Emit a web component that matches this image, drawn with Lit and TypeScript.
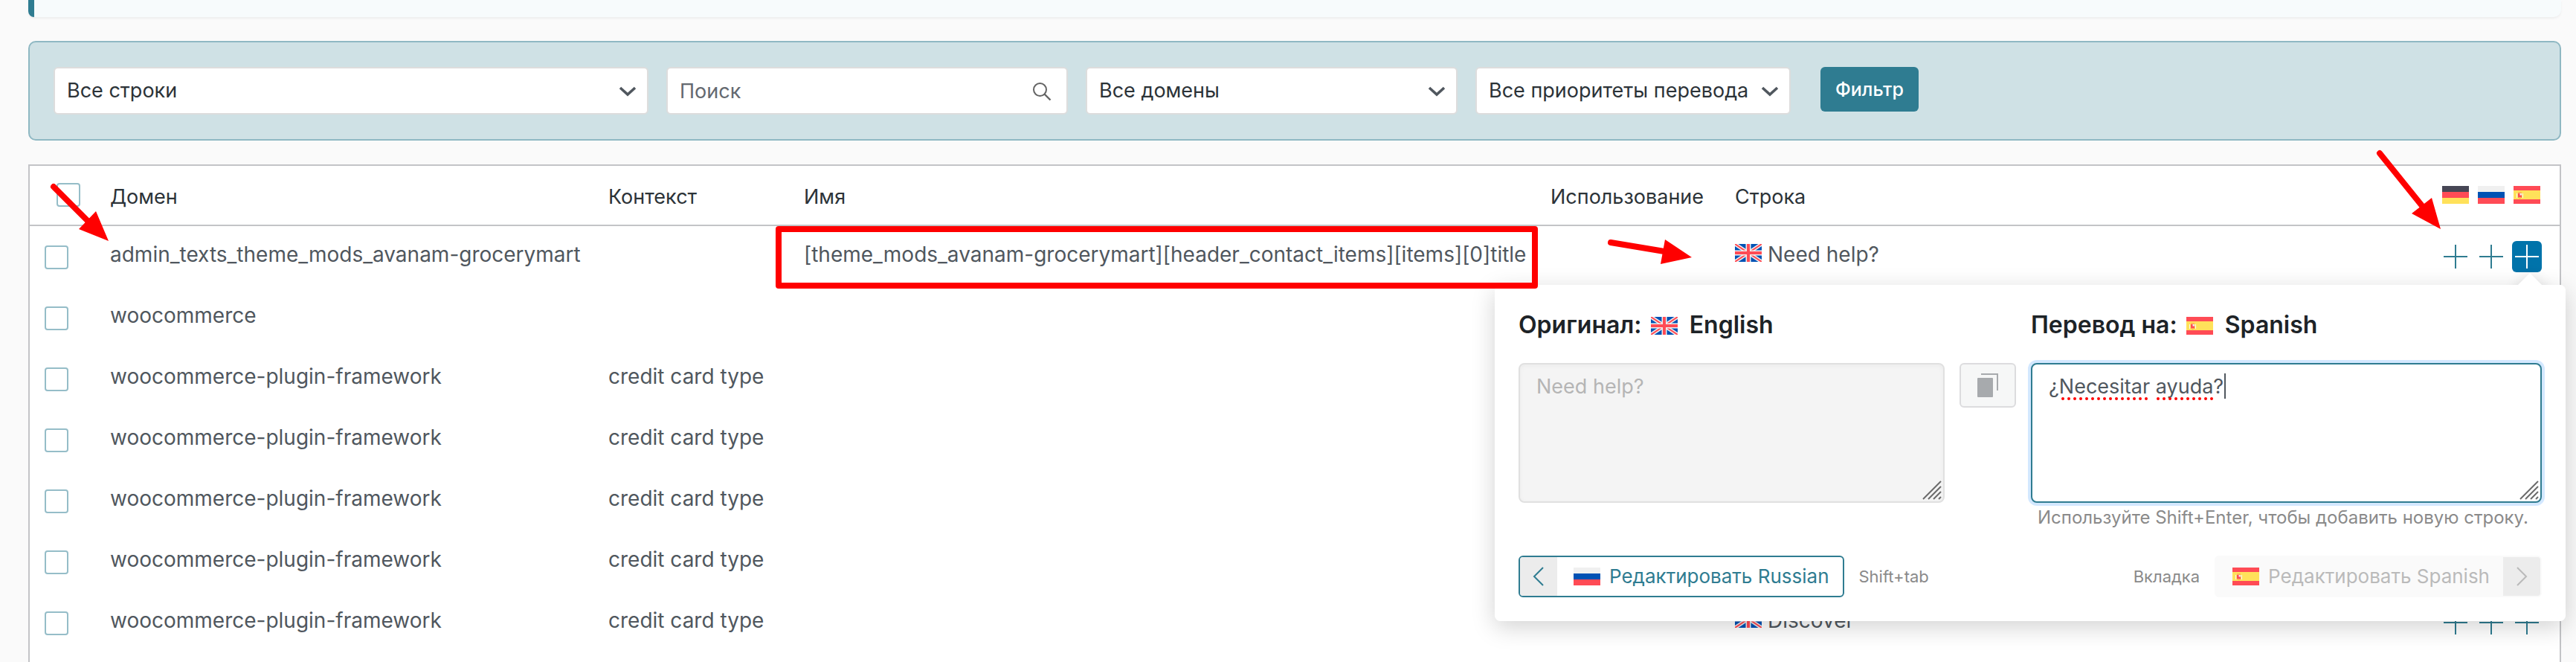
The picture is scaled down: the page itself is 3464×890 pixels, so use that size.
import { LitElement, html, css, svg, nothing } from "lit";
import { customElement, state } from "lit/decorators.js";

type Lang = "en" | "de" | "ru" | "es";

const flagArt = {
  en: svg`
    <rect width="36" height="24" fill="#0052b4"/>
    <path d="M0 0L36 24M36 0L0 24" stroke="#f0f0f0" stroke-width="5"/>
    <path d="M0 0L36 24M36 0L0 24" stroke="#ff4b55" stroke-width="2"/>
    <path d="M18 0V24M0 12H36" stroke="#f0f0f0" stroke-width="7"/>
    <path d="M18 0V24M0 12H36" stroke="#ff4b55" stroke-width="4"/>`,
  de: svg`
    <rect width="36" height="8" fill="#464655"/>
    <rect y="8" width="36" height="8" fill="#ff4b55"/>
    <rect y="16" width="36" height="8" fill="#ffe15a"/>`,
  ru: svg`
    <rect width="36" height="8" fill="#f0f0f0"/>
    <rect y="8" width="36" height="8" fill="#0052b4"/>
    <rect y="16" width="36" height="8" fill="#ff4b55"/>`,
  es: svg`
    <rect width="36" height="24" fill="#ff4b55"/>
    <rect y="6" width="36" height="12" fill="#ffe15a"/>
    <rect x="4" y="10" width="1" height="6" fill="#f5f5f5"/>
    <rect x="12" y="10" width="1" height="6" fill="#f5f5f5"/>
    <rect x="6" y="8" width="5" height="2" fill="#ffb655"/>
    <path d="M6 10h5v4a2.5 2.5 0 0 1-5 0z" fill="#ff4b55"/>
    <rect x="8.5" y="10" width="2.5" height="2.5" fill="#f5e6f0"/>
    <rect x="7" y="15" width="3" height="1" fill="#ffb655"/>`,
};

const flag = (lang: Lang) =>
  html`<svg class="flag" viewBox="0 0 36 24" aria-hidden="true">${flagArt[lang]}</svg>`;

const chevron = html`<svg class="chevron" viewBox="0 0 24 14" aria-hidden="true">
  <path d="M2 2L12 11L22 2" fill="none" stroke="#50575e" stroke-width="3.6"/>
</svg>`;

const plus = html`<svg class="plus-icon" viewBox="0 0 32 32" aria-hidden="true">
  <path d="M16 0V32M0 16H32" stroke="currentColor" stroke-width="2"/>
</svg>`;

const grip = html`<svg class="grip" viewBox="0 0 26 26" aria-hidden="true">
  <path d="M1 25L25 1M8 25L25 8M15 25L25 15M22 25L25 22" stroke="#6b6b6b" stroke-width="2"/>
</svg>`;

interface Row {
  domain: string;
  context?: string;
  name?: string;
  text?: string;
}

const framework: Row = { domain: "woocommerce-plugin-framework", context: "credit card type" };

const rows: Row[] = [
  {
    domain: "admin_texts_theme_mods_avanam-grocerymart",
    name: "[theme_mods_avanam-grocerymart][header_contact_items][items][0]title",
    text: "Need help?",
  },
  { domain: "woocommerce" },
  framework,
  framework,
  framework,
  framework,
  { ...framework, text: "Discover" },
];

const targets: { code: Lang; name: string }[] = [
  { code: "de", name: "German" },
  { code: "ru", name: "Russian" },
  { code: "es", name: "Spanish" },
];

@customElement("app-root")
export class AppRoot extends LitElement {
  @state() private translation = "¿Necesitar ayuda?";

  static styles = css`
    :host {
      display: block;
      font: 28px/38px Inter, "Liberation Sans", sans-serif;
      color: #50575e;
      background: #fafafa;
    }
    * { box-sizing: border-box; }
    button, input, select, textarea { font: inherit; margin: 0; }

    .page {
      position: relative;
      display: flex;
      flex-direction: column;
      gap: 32px;
      min-height: 100vh;
      padding: 0 20px 0 38px;
      overflow: hidden;
    }
    .notice {
      height: 23px;
      border-left: 8px solid #2f7c91;
      border-radius: 0 0 10px 8px;
      background: #f7fbfc;
      box-shadow: 0 2px 3px rgba(0, 0, 0, 0.05);
    }

    .filters {
      display: flex;
      align-items: flex-start;
      gap: 24px;
      padding: 33px 32px;
      border: 2px solid #8fb8c3;
      border-radius: 10px;
      background: #cfe1e5;
    }
    .field { position: relative; flex: none; }
    .field.status { width: 800px; }
    .field.search { width: 540px; }
    .field.domain { width: 500px; }
    .field.priority { width: 424px; }
    .control {
      display: block;
      width: 100%;
      height: 64px;
      padding: 0 16px;
      border: 2px solid #dddddd;
      border-radius: 6px;
      background: #fff;
      color: #2c3338;
      font-size: 27px;
      appearance: none;
      outline: none;
    }
    .control::placeholder { color: #646970; opacity: 1; }
    .chevron {
      position: absolute;
      right: 16px;
      top: 26px;
      width: 24px;
      height: 14px;
      pointer-events: none;
    }
    .magnifier {
      position: absolute;
      right: 22px;
      top: 20px;
      width: 26px;
      height: 26px;
    }
    .submit {
      height: 60px;
      margin-left: 16px;
      padding: 0 20px;
      border: 0;
      border-radius: 6px;
      background: #2f7c91;
      color: #fff;
      font-size: 25px;
      font-weight: 500;
    }

    .strings {
      position: relative;
      flex: 1;
      border: 2px solid #c3c4c7;
      border-bottom: 0;
      background: #fff;
    }
    table {
      width: 100%;
      table-layout: fixed;
      border-collapse: separate;
      border-spacing: 0;
    }
    .col-check { width: 98px; }
    .col-domain { width: 670px; }
    .col-context { width: 263px; }
    .col-name { width: 1004px; }
    .col-usage { width: 248px; }
    .col-langs { width: 180px; }
    th {
      height: 81px;
      padding: 23px 10px 0;
      border-bottom: 2px solid #c3c4c7;
      color: #2c3338;
      font-size: 27px;
      font-weight: 400;
      text-align: left;
      vertical-align: top;
      white-space: nowrap;
    }
    td {
      height: 82px;
      padding: 19px 10px 0;
      vertical-align: top;
      white-space: nowrap;
    }
    .check { padding: 26px 0 0 20px; }
    th.check { padding: 23px 0 0 36px; }
    .box {
      display: block;
      width: 32px;
      height: 32px;
      border: 2px solid #95bdc8;
      border-radius: 4px;
      background: #fff;
      appearance: none;
    }
    .flag { width: 36px; height: 24px; }
    .source .flag { margin-right: 8px; }
    th.langs { padding: 27px 26px 0 0; }
    td.langs { padding: 20px 24px 0 0; }
    .lang-list { display: flex; justify-content: flex-end; }
    th .lang-list { gap: 12px; }
    td .lang-list { gap: 8px; }
    .add {
      display: grid;
      place-items: center;
      width: 40px;
      height: 42px;
      padding: 0;
      border: 0;
      border-radius: 6px;
      background: none;
      color: #2f7c91;
    }
    .add.active { background: #0073aa; color: #fff; }
    .plus-icon { width: 32px; height: 32px; }

    .popup {
      position: absolute;
      z-index: 1;
      top: 160px;
      right: -8px;
      width: 1440px;
      padding: 34px 32px 32px;
      border-radius: 8px;
      background: #fff;
      box-shadow: 0 8px 32px rgba(0, 0, 0, 0.18);
    }
    .pointer {
      position: absolute;
      top: -9px;
      right: 31px;
      width: 34px;
      height: 34px;
      background: #fff;
      transform: rotate(45deg);
      box-shadow: -2px -2px 16px rgba(0, 0, 0, 0.08);
    }
    .backdrop {
      position: absolute;
      inset: 0;
      border-radius: 8px;
      background: #fff;
    }
    .editor {
      position: relative;
      display: grid;
      grid-template-columns: 573px 76px 1fr;
      grid-template-rows: 71px 188px;
      column-gap: 20px;
    }
    .title {
      color: #1d2327;
      font-size: 32px;
      line-height: 40px;
      font-weight: 600;
    }
    .title .flag { vertical-align: -2px; margin: 0 8px 0 4px; }
    .title.target { grid-column: 3; }
    .area { position: relative; }
    textarea {
      display: block;
      width: 100%;
      height: 188px;
      padding: 11px 22px;
      border: 2px solid #2f7c91;
      border-radius: 8px;
      background: #fff;
      color: #50575e;
      font-size: 27px;
      resize: none;
      outline: none;
      box-shadow: 0 0 0 4px #d3e8ff;
    }
    textarea:disabled {
      border-color: #e0e0e0;
      background: #f4f4f4;
      color: #b5b5b5;
      box-shadow: inset 0 2px 6px rgba(0, 0, 0, 0.04);
    }
    .grip {
      position: absolute;
      right: 4px;
      bottom: 4px;
      width: 26px;
      height: 26px;
    }
    .marks {
      position: absolute;
      left: 0;
      top: 0;
      width: 300px;
      height: 60px;
      pointer-events: none;
    }
    .copy {
      display: grid;
      place-items: center;
      width: 76px;
      height: 60px;
      padding: 0;
      border: 2px solid #dcdcde;
      border-radius: 6px;
      background: #f6f7f7;
    }
    .copy svg { width: 28px; height: 32px; }
    .hint {
      position: relative;
      margin: 4px 0 35px;
      padding-left: 698px;
      color: #8a8a8a;
      font-size: 24px;
      line-height: 32px;
    }
    .nav {
      position: relative;
      display: flex;
      align-items: center;
      gap: 20px;
      color: #8a8a8a;
      font-size: 22px;
    }
    .spacer { flex: 1; }
    .step {
      display: flex;
      align-items: center;
      height: 56px;
      padding: 0;
      border: 2px solid #2f7c91;
      border-radius: 6px;
      background: #fff;
      color: #2f7c91;
      font-size: 26px;
      overflow: hidden;
    }
    .step:disabled {
      border-color: #fafafa;
      background: #fafafa;
      color: #bababa;
    }
    .step .caption { display: flex; align-items: center; gap: 12px; padding: 0 18px 0 22px; }
    .step .arrow {
      display: grid;
      place-items: center;
      width: 50px;
      height: 52px;
      background: #ececec;
    }
    .arrow svg { width: 16px; height: 28px; }

    .annotations {
      position: absolute;
      z-index: 2;
      left: 0;
      top: 0;
      width: 3464px;
      height: 890px;
      pointer-events: none;
    }
  `;

  private select(kind: string, label: string, value: string) {
    return html`<div class="field ${kind}">
      <select class="control" aria-label=${label}><option>${value}</option></select>
      ${chevron}
    </div>`;
  }

  private filters() {
    return html`<form class="filters" @submit=${(e: Event) => e.preventDefault()}>
      ${this.select("status", "Строки", "Все строки")}
      <div class="field search">
        <input class="control" type="text" placeholder="Поиск" aria-label="Поиск">
        <svg class="magnifier" viewBox="0 0 26 26" aria-hidden="true">
          <circle cx="10.5" cy="10.5" r="8.5" fill="none" stroke="#646464" stroke-width="2"/>
          <path d="M16.5 16.5L24.5 24.5" stroke="#646464" stroke-width="2.4"/>
        </svg>
      </div>
      ${this.select("domain", "Домены", "Все домены")}
      ${this.select("priority", "Приоритеты", "Все приоритеты перевода")}
      <button class="submit" type="submit">Фильтр</button>
    </form>`;
  }

  private row(row: Row, index: number) {
    return html`<tr>
      <td class="check"><input class="box" type="checkbox" aria-label=${row.domain}></td>
      <td>${row.domain}</td>
      <td>${row.context ?? nothing}</td>
      <td>${row.name ?? nothing}</td>
      <td></td>
      <td class="source">${row.text ? html`${flag("en")}${row.text}` : nothing}</td>
      <td class="langs">
        <div class="lang-list">
          ${targets.map(
            (t) => html`<button
              class="add ${index === 0 && t.code === "es" ? "active" : ""}"
              type="button"
              aria-label=${t.name}
            >${plus}</button>`
          )}
        </div>
      </td>
    </tr>`;
  }

  private popup() {
    return html`<section class="popup">
      <div class="pointer"></div>
      <div class="backdrop"></div>
      <div class="editor">
        <label class="title" for="original">Оригинал: ${flag("en")} English</label>
        <label class="title target" for="translation">Перевод на: ${flag("es")} Spanish</label>
        <div class="area">
          <textarea id="original" disabled .value=${"Need help?"}></textarea>
          ${grip}
        </div>
        <button class="copy" type="button" aria-label="Копировать">
          <svg viewBox="0 0 28 32" aria-hidden="true">
            <rect y="6" width="21" height="26" rx="1" fill="#a7aaad"/>
            <path d="M5 1H27V23" fill="none" stroke="#a7aaad" stroke-width="2"/>
          </svg>
        </button>
        <div class="area">
          <textarea
            id="translation"
            spellcheck="false"
            .value=${this.translation}
            @input=${(e: Event) => (this.translation = (e.target as HTMLTextAreaElement).value)}
          ></textarea>
          <svg class="marks" viewBox="0 0 300 60" aria-hidden="true">
            <path d="M43 48H157M171 48H244" stroke="#f00" stroke-width="4" stroke-linecap="round" stroke-dasharray="0 8"/>
            <path d="M261 14V48" stroke="#50575e" stroke-width="2"/>
          </svg>
          ${grip}
        </div>
      </div>
      <div class="hint">Используйте Shift+Enter, чтобы добавить новую строку.</div>
      <div class="nav">
        <button class="step" type="button">
          <span class="arrow"><svg viewBox="0 0 16 28"><path d="M14 2L2 14L14 26" fill="none" stroke="currentColor" stroke-width="2"/></svg></span>
          <span class="caption">${flag("ru")}<span>Редактировать Russian</span></span>
        </button>
        <span>Shift+tab</span>
        <span class="spacer"></span>
        <span>Вкладка</span>
        <button class="step" type="button" disabled>
          <span class="caption">${flag("es")}<span>Редактировать Spanish</span></span>
          <span class="arrow"><svg viewBox="0 0 16 28"><path d="M2 2L14 14L2 26" fill="none" stroke="currentColor" stroke-width="2"/></svg></span>
        </button>
      </div>
    </section>`;
  }

  render() {
    return html`<main class="page">
      <div class="notice"></div>
      ${this.filters()}
      <div class="strings">
        <table>
          <colgroup>
            <col class="col-check"><col class="col-domain"><col class="col-context">
            <col class="col-name"><col class="col-usage"><col><col class="col-langs">
          </colgroup>
          <thead>
            <tr>
              <th class="check"><input class="box" type="checkbox" aria-label="Выбрать все"></th>
              <th>Домен</th>
              <th>Контекст</th>
              <th>Имя</th>
              <th>Использование</th>
              <th>Строка</th>
              <th class="langs"><div class="lang-list">${targets.map((t) => flag(t.code))}</div></th>
            </tr>
          </thead>
          <tbody>${rows.map((r, i) => this.row(r, i))}</tbody>
        </table>
        ${this.popup()}
      </div>
      <svg class="annotations" viewBox="0 0 3464 890" aria-hidden="true">
        <rect x="1047" y="308" width="1017" height="76" fill="none" stroke="#f00" stroke-width="8" stroke-linejoin="round"/>
        <path d="M72 251L120 299M2166 326L2238 338M3200 206L3258 278" stroke="#f00" stroke-width="8" stroke-linecap="round"/>
        <path d="M106 308L129 284L146 324ZM2239 322L2233 355L2275 346ZM3243 287L3270 266L3282 308Z" fill="#f00"/>
      </svg>
    </main>`;
  }
}
